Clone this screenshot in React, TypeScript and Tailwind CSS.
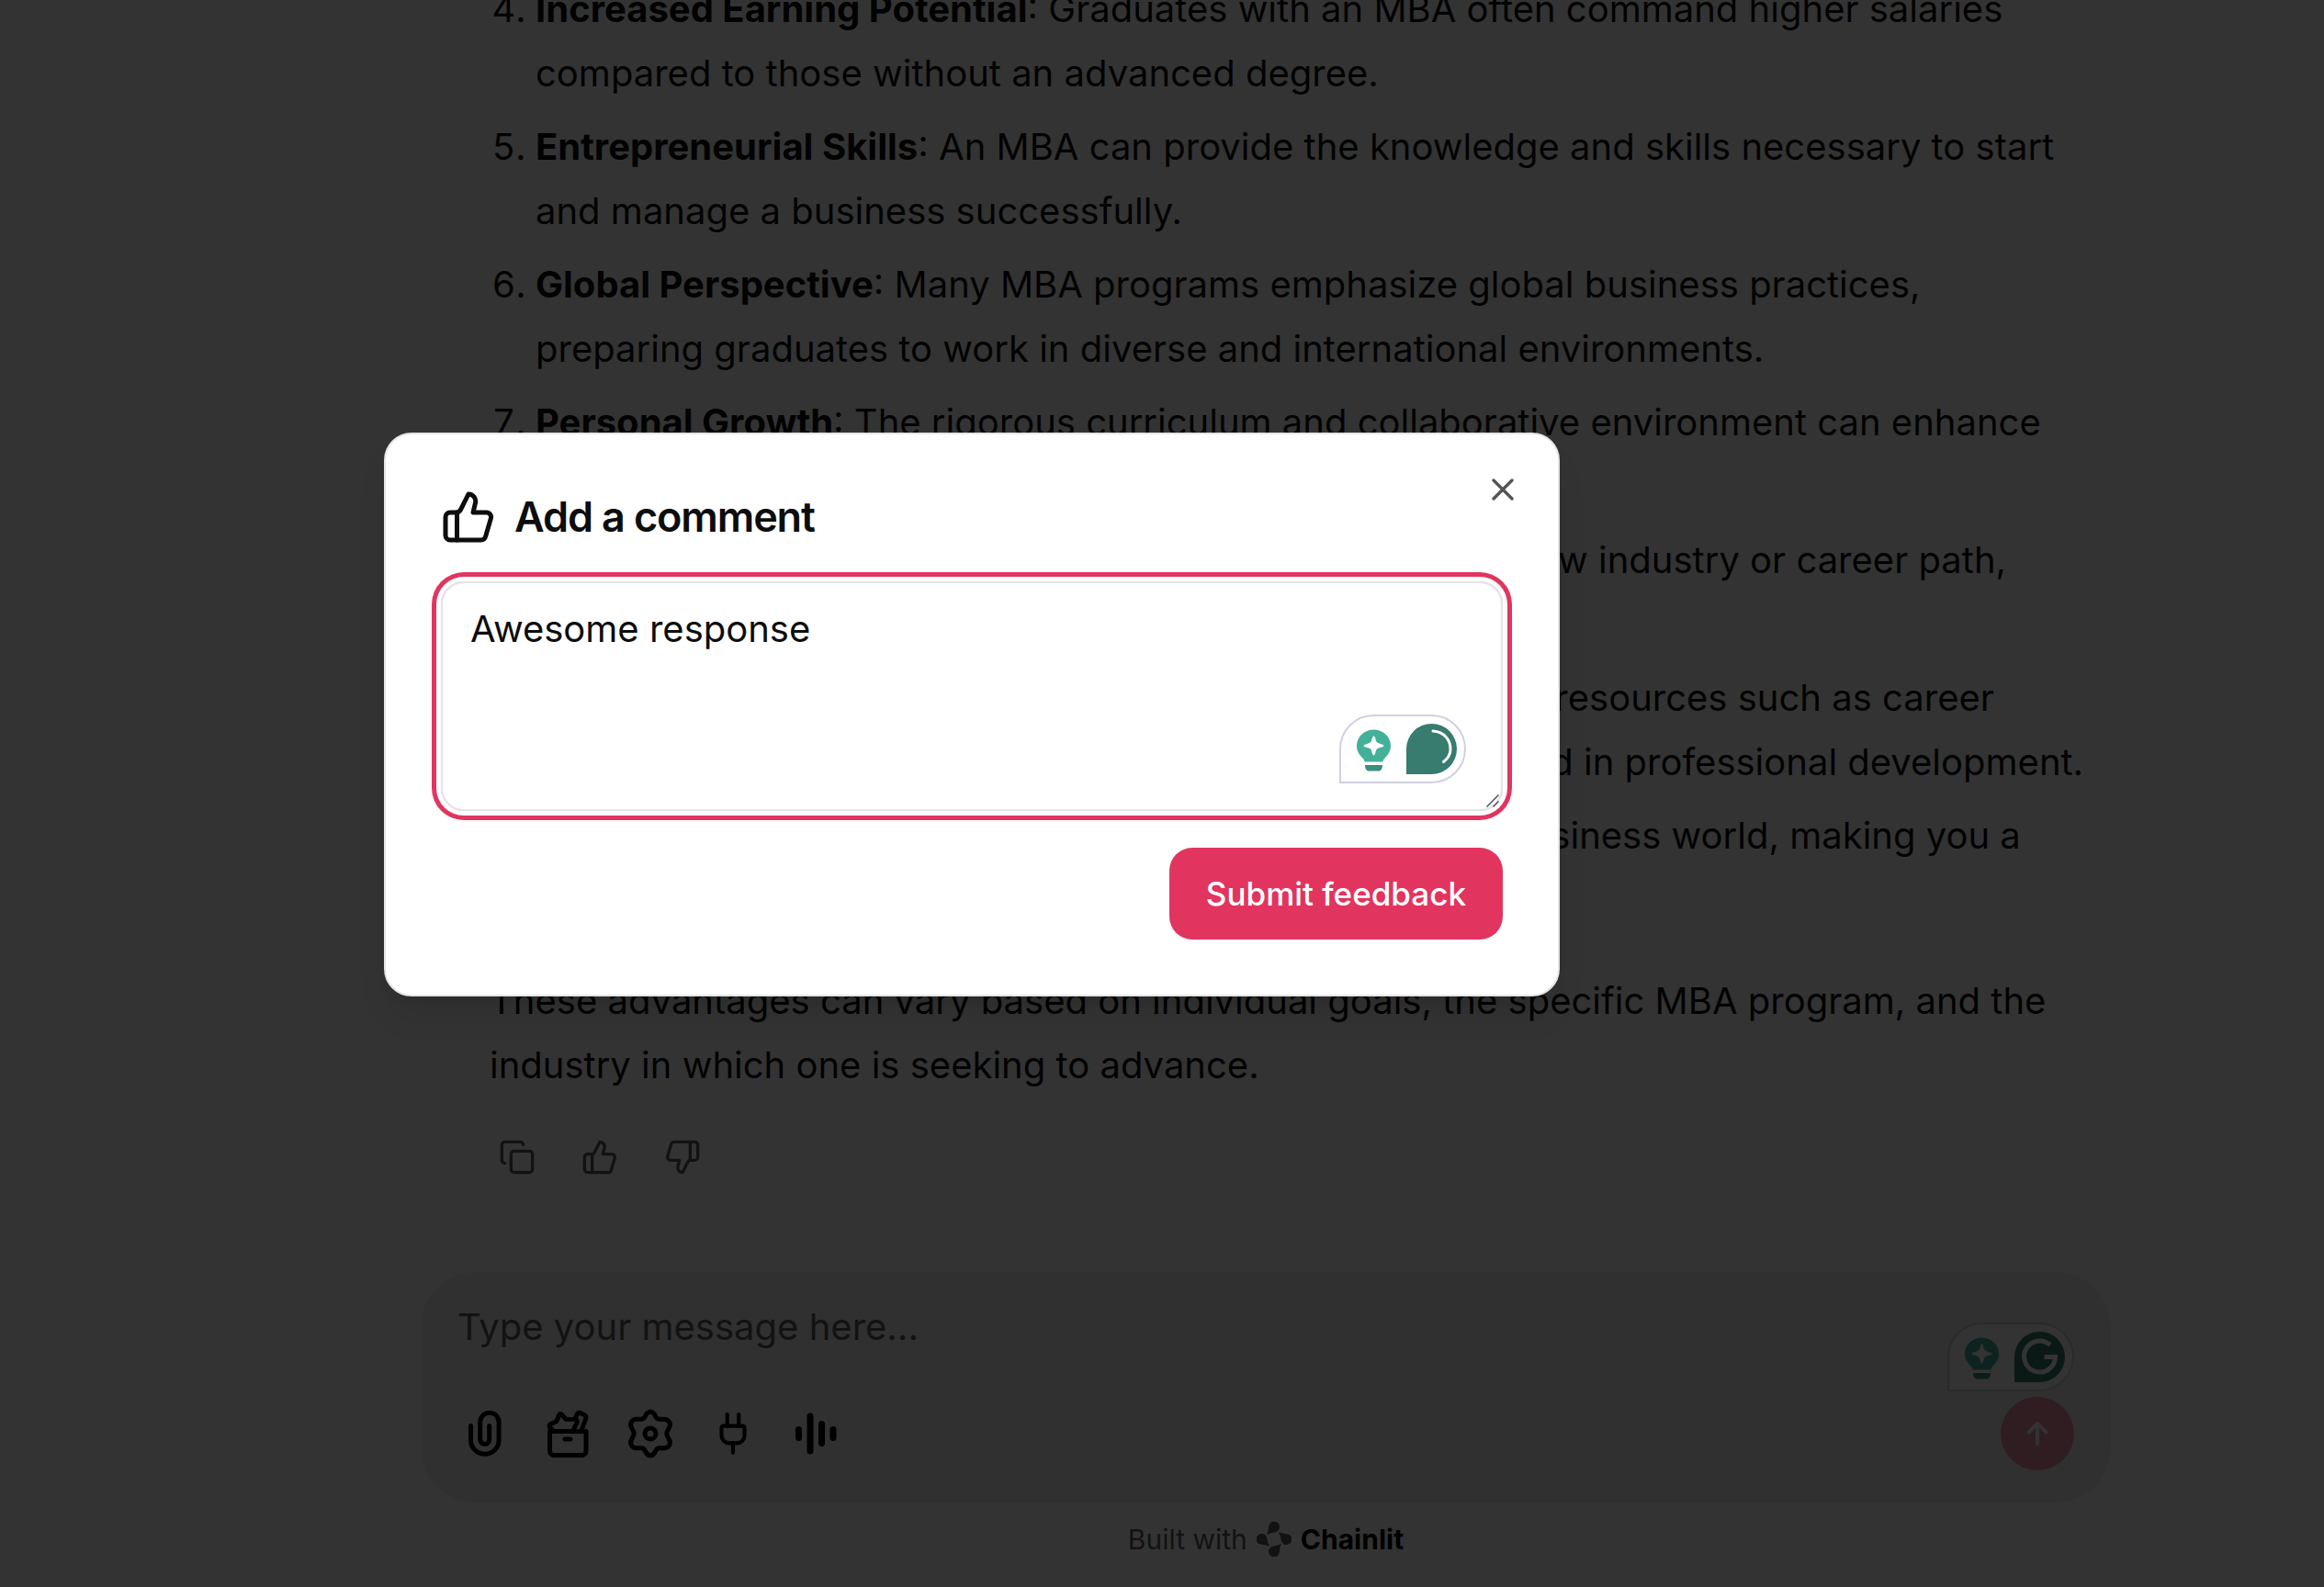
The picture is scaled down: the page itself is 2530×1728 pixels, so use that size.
import { Copy, Plug, ThumbsDown, ThumbsUp, X } from "lucide-react";
import type { ReactNode } from "react";

type Point = { n: number; title: string; body: string };

const points: Point[] = [
  { n: 4, title: "Increased Earning Potential", body: "Graduates with an MBA often command higher salaries compared to those without an advanced degree." },
  { n: 5, title: "Entrepreneurial Skills", body: "An MBA can provide the knowledge and skills necessary to start and manage a business successfully." },
  { n: 6, title: "Global Perspective", body: "Many MBA programs emphasize global business practices, preparing graduates to work in diverse and international environments." },
  { n: 7, title: "Personal Growth", body: "The rigorous curriculum and collaborative environment can enhance critical thinking, communication, and confidence." },
  { n: 8, title: "Career Changes", body: "For those who wish to transition into a new industry or career path, earning an MBA can provide the foundation." },
  { n: 9, title: "Access to Resources", body: "Business schools generally provide resources such as career services, workshops, and mentorships to keep you involved in professional development." },
  { n: 10, title: "Professional Credibility", body: "The MBA is appreciated in the business world, making you a more attractive candidate." },
];

function PaperClipIcon() {
  return (
    <svg viewBox="0 0 60 60" className="size-[60px]" fill="none" stroke="currentColor" strokeWidth="5" strokeLinecap="round" aria-hidden="true">
      <path d="M14.500 21.500v15.500a15.300 15.300 0 0 0 30.600 0V17.500a10.200 10.200 0 0 0-20.400 0V36.500a5 5 0 0 0 10 0V21.500" />
    </svg>
  );
}

function ToolBoxIcon() {
  return (
    <svg viewBox="0 0 60 60" className="size-[60px]" fill="none" stroke="currentColor" strokeWidth="5" strokeLinecap="round" strokeLinejoin="round" aria-hidden="true">
      <path d="M10.500 27.500h39.500v21.500a4.500 4.500 0 0 1-4.500 4.500H15a4.500 4.500 0 0 1-4.500-4.500Z" />
      <path d="M27 36h6" />
      <path d="M14 26.500l-3.500-3.500c-1-1.500-.5-2.500 1-3.300l6.500-3.200 2.500-6.500c.8-1.800 2.200-1.800 3.400-.4l4.100 4.700 7.500.2" />
      <path d="M36 26.500l4.500-9.500-2-4 1.500-3.500c.8-1.800 2.500-2.400 4.200-1.700l3.800 1.700c1.800.8 2.500 2.500 1.700 4.300L45 26.500" />
    </svg>
  );
}

function GearIcon() {
  return (
    <svg viewBox="0 0 60 60" className="size-[60px]" fill="none" stroke="currentColor" strokeWidth="5" strokeLinejoin="round" aria-hidden="true">
      <path d="M25.500 9C28 5.300 32 5.300 34.500 9L36 11.800C37 13.500 38.500 14.300 40 14.300H44.500C50 14.300 53 19 50.500 23.500L48.500 27.500C47.700 29 47.700 31 48.500 32.500L50.500 36.500C53 41 50 45.700 44.500 45.700H40C38.500 45.700 37 46.500 36 48.200L34.500 51C32 54.700 28 54.700 25.500 51L24 48.200C23 46.500 21.500 45.700 20 45.700H15.500C10 45.700 7 41 9.500 36.500L11.500 32.500C12.300 31 12.300 29 11.500 27.500L9.500 23.500C7 19 10 14.300 15.500 14.300H20C21.500 14.300 23 13.500 24 11.800Z" />
      <circle cx="30" cy="30" r="6" />
    </svg>
  );
}

function VoiceIcon() {
  return (
    <svg viewBox="0 0 60 60" className="size-[60px]" fill="none" stroke="currentColor" strokeWidth="7" strokeLinecap="round" aria-hidden="true">
      <path d="M11.500 25.500v9M24 11v38M36.500 19.500v21M49 25.500v9" />
    </svg>
  );
}

function SendArrowIcon() {
  return (
    <svg viewBox="0 0 28 28" className="size-7" fill="none" stroke="currentColor" strokeWidth="4" strokeLinecap="round" strokeLinejoin="round" aria-hidden="true">
      <path d="M14 25.500V3M4.500 12.500L14 3l9.500 9.500" />
    </svg>
  );
}

const quarterTurns = [0, 90, 180, 270];

function ChainlitMark() {
  return (
    <svg viewBox="0 0 38 38" className="size-[38px]" fill="currentColor" aria-hidden="true">
      {quarterTurns.map((angle) => (
        <path
          key={angle}
          transform={`rotate(${angle} 19 19)`}
          d="M11 13.500C12.800 11.500 12.500 9 13.200 5.500A5.900 5.900 0 1 1 23 10C20 12.300 15.500 11 12.300 14Z"
        />
      ))}
    </svg>
  );
}

function AssistantBadge({ variant }: { variant: "loading" | "logo" }) {
  return (
    <svg viewBox="0 0 138 75" className="h-[75px] w-[138px]" fill="none" aria-hidden="true">
      <path d="M1 74V37.500A36.500 36.500 0 0 1 37.500 1H100.500a36.500 36.500 0 0 1 0 73Z" fill="#fff" stroke="#cfd1e0" strokeWidth="2" />
      <path d="M37.500 16.500c-10.500 0-18.500 8-18.500 17.500 0 6.500 3.500 10.500 6 13 1.200 1.300 2.500 2.500 2.500 4.500h20c0-2 1.300-3.200 2.500-4.500 2.500-2.500 6-6.500 6-13 0-9.500-8-17.500-18.500-17.500Z" fill="#43b19a" />
      <path d="M28 55h19c0 4-1.500 6.500-4.500 6.500h-10c-3 0-4.500-2.500-4.500-6.500Z" fill="#3b8f7f" />
      <path d="M37.500 23.500c1.800 0 1.800 5 3.500 6.800s7.500 2 7.500 3.700-5.700 1.800-7.500 3.600-1.700 6.900-3.500 6.900-1.800-5.100-3.500-6.900-7.500-1.900-7.500-3.600 5.700-1.900 7.500-3.700 1.700-6.800 3.500-6.800Z" fill="#fff" />
      <path d="M73 65V37.500A27.500 27.500 0 1 1 100.500 65Z" fill="#377c6e" />
      {variant === "loading" ? (
        <path d="M102 18c12 1 19 9 19 20 0 5-3 10-7.500 13.500" stroke="#fff" strokeWidth="3" strokeLinecap="round" />
      ) : (
        <path d="M112 24.500A17 17 0 1 0 117.500 37.500H105.500" stroke="#fff" strokeWidth="5" />
      )}
    </svg>
  );
}

function IconButton({ label, children }: { label: string; children: ReactNode }) {
  return (
    <button type="button" aria-label={label} className="flex size-[90px] items-center justify-center">
      {children}
    </button>
  );
}

export default function App() {
  return (
    <div className="relative h-screen overflow-hidden bg-white font-['Inter',sans-serif] text-[40px] leading-[70px] text-[#0d0d0d] [font-optical-sizing:none]">
      <main className="ml-[226px] flex h-full flex-col items-center">
        <div className="-mt-[25px] w-full max-w-[1840px] pr-5 pl-[75px]">
          <ol className="flex flex-col gap-[10px]">
            {points.map((p) => (
              <li key={p.n} value={p.n} className="ml-[50px] list-decimal">
                <strong className="font-bold">{p.title}</strong>: {p.body}
              </li>
            ))}
          </ol>
          <p className="mt-10">
            These advantages can vary based on individual goals, the specific MBA program, and the industry in which one is seeking to advance.
          </p>
          <div className="mt-5 -ml-[15px] flex text-[#5c5c5c]">
            <IconButton label="Copy to clipboard"><Copy size={40} /></IconButton>
            <IconButton label="Helpful"><ThumbsUp size={40} /></IconButton>
            <IconButton label="Not helpful"><ThumbsDown size={40} /></IconButton>
          </div>
        </div>
        <form className="relative mt-20 w-full max-w-[1840px] rounded-[60px] bg-[#f0f0f0] py-[30px] pr-10 pl-[25px]" onSubmit={(e) => e.preventDefault()}>
          <input
            aria-label="Message"
            placeholder="Type your message here..."
            className="mb-[41px] ml-[15px] block h-[60px] w-5/6 bg-transparent outline-none placeholder:text-[#5c5c5c] placeholder:opacity-100"
          />
          <div className="flex items-center text-black">
            <IconButton label="Attach files"><PaperClipIcon /></IconButton>
            <IconButton label="Commands"><ToolBoxIcon /></IconButton>
            <IconButton label="Settings"><GearIcon /></IconButton>
            <IconButton label="Connections"><Plug size={50} /></IconButton>
            <IconButton label="Start recording"><VoiceIcon /></IconButton>
            <button type="submit" aria-label="Send message" className="ml-auto flex size-20 items-center justify-center rounded-full bg-[#e1355f] text-white opacity-50">
              <SendArrowIcon />
            </button>
          </div>
          <div className="absolute top-[55px] right-10">
            <AssistantBadge variant="logo" />
          </div>
        </form>
        <a href="#chainlit" className="mt-5 flex items-center gap-[10px] text-[30px] leading-10 text-[#5c5c5c]">
          Built with
          <ChainlitMark />
          <span className="font-bold text-black">Chainlit</span>
        </a>
      </main>

      <div className="absolute inset-0 bg-black/80" />

      <div
        role="dialog"
        aria-labelledby="comment-title"
        className="absolute top-[471px] left-[418px] flex w-[1280px] flex-col gap-10 rounded-[30px] border-2 border-[#e5e5e5] bg-white p-[60px] shadow-[0_25px_38px_-8px_rgba(0,0,0,0.1),0_10px_15px_-10px_rgba(0,0,0,0.1)]"
      >
        <h2 id="comment-title" className="flex items-center gap-5 text-[45px] leading-[60px] font-semibold tracking-tight">
          <ThumbsUp size={60} />
          Add a comment
        </h2>
        <div className="relative">
          <textarea
            aria-label="Comment"
            defaultValue="Awesome response"
            spellCheck={false}
            className="block h-[250px] w-full resize-none rounded-[25px] border-2 border-[#e5e5e5] px-[30px] py-5 leading-[60px] ring-5 ring-[#e1355f] ring-offset-5 outline-none"
          />
          <div className="absolute right-10 bottom-[30px]">
            <AssistantBadge variant="loading" />
          </div>
          <svg viewBox="0 0 14 14" className="absolute right-1 bottom-1 size-[14px]" stroke="#555" strokeWidth="1.500" aria-hidden="true">
            <path d="M0.500 13.500L13.500 0.500M7.500 13.500L13.500 7.500" />
          </svg>
        </div>
        <button type="button" className="h-[100px] self-end rounded-[25px] bg-[#e1355f] px-10 text-[35px] leading-[50px] font-medium text-white">
          Submit feedback
        </button>
        <button type="button" aria-label="Close" className="absolute top-10 right-10 opacity-70">
          <X size={40} />
        </button>
      </div>
    </div>
  );
}
